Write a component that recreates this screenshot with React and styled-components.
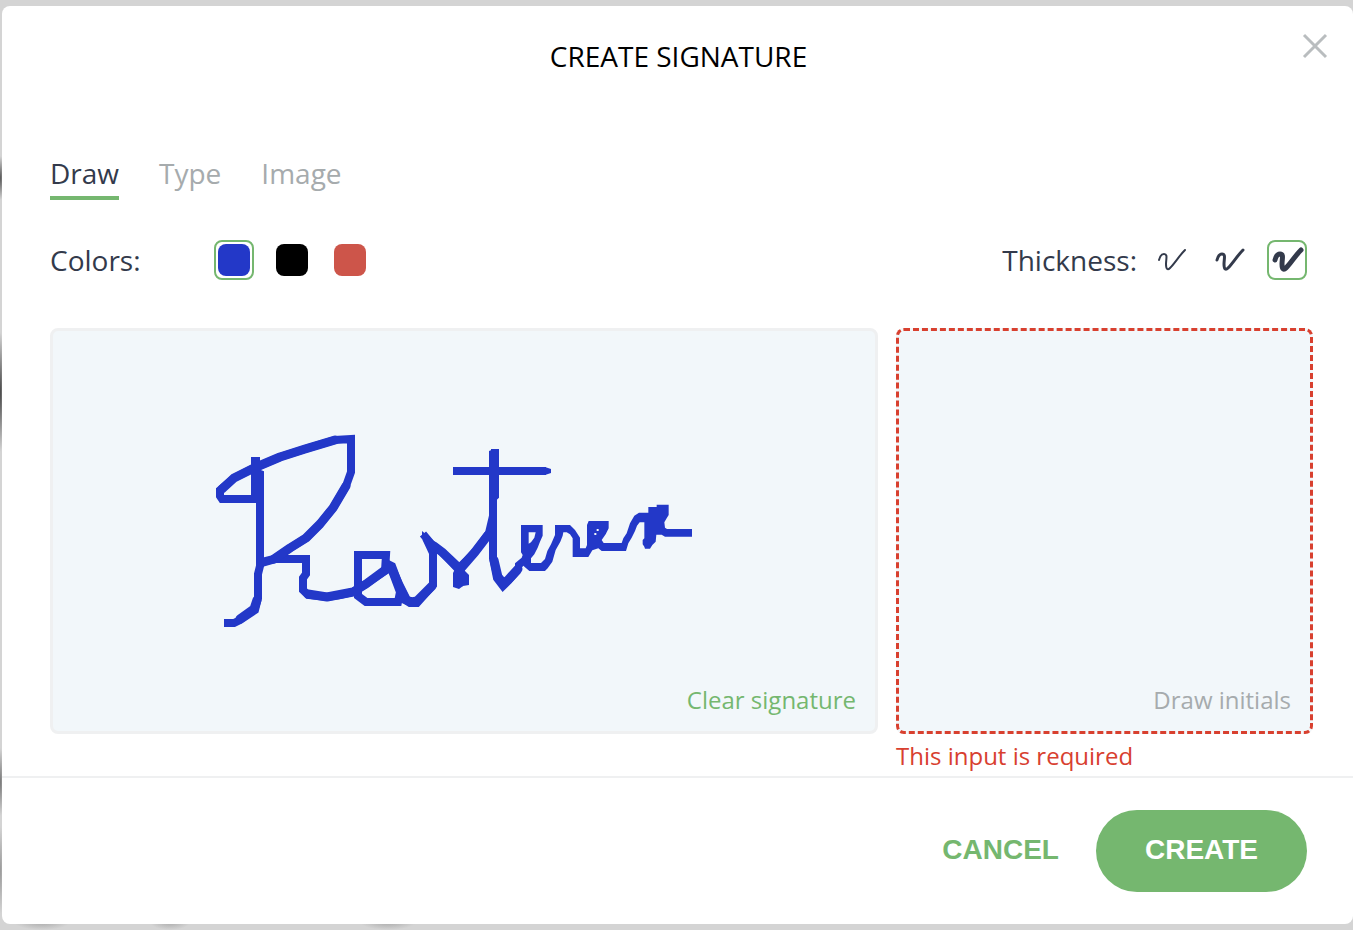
import React, { useState } from "react";
import styled, { createGlobalStyle } from "styled-components";

const ink = "#333a4b";
const green = "#75b76f";
const muted = "#a6abad";
const danger = "#d8402f";
const line = "#eff0f1";

const GlobalStyle = createGlobalStyle`
  *, *::before, *::after { box-sizing: border-box; }
  body { margin: 0; font-family: "Open Sans", "Noto Sans", sans-serif; color: ${ink}; }
  button { font: inherit; border: 0; padding: 0; background: none; cursor: pointer; }
`;

const Backdrop = styled.div`
  min-height: 100vh;
  padding: 6px 0 6px 2px;
  background:
    radial-gradient(ellipse 6px 22px at 0 178px, #555, transparent),
    radial-gradient(ellipse 6px 60px at 0 392px, #444, transparent),
    radial-gradient(ellipse 6px 34px at 0 782px, #777, transparent),
    radial-gradient(ellipse 6px 44px at 0 870px, #999, transparent),
    radial-gradient(ellipse 28px 8px at 42px 922px, #aaa, transparent),
    radial-gradient(ellipse 20px 8px at 170px 922px, #aaa, transparent),
    radial-gradient(ellipse 28px 8px at 388px 922px, #aaa, transparent),
    #d4d4d4;
`;

const Modal = styled.section`
  position: relative;
  background: #fff;
  border-radius: 8px;
`;

const Body = styled.div`
  padding: 32px 40px 4px 48px;
`;

const Title = styled.h1`
  margin: 0 0 79px;
  padding-right: 6px;
  font-size: 28px;
  line-height: 36px;
  font-weight: 400;
  text-align: center;
  color: #000;
`;

const Close = styled.button`
  position: absolute;
  top: 24px;
  right: 22px;
  width: 32px;
  height: 32px;
  svg { display: block; }
`;

const Tabs = styled.div`
  display: flex;
  gap: 40px;
`;

const Tab = styled.button`
  && {
    padding-bottom: 3px;
    border-bottom: 4px solid ${(p) => (p.$active ? green : "transparent")};
    font-size: 28px;
    line-height: 40px;
    color: ${(p) => (p.$active ? ink : muted)};
  }
`;

const Options = styled.div`
  display: flex;
  justify-content: space-between;
  margin: 40px 6px 48px 0;
`;

const Choices = styled.div`
  display: flex;
  align-items: center;
  gap: 18px;
`;

const ChoiceLabel = styled.span`
  min-width: ${(p) => p.$width || 0}px;
  margin-right: ${(p) => (p.$width ? 0 : -4)}px;
  font-size: 28px;
  line-height: 40px;
`;

const Choice = styled.label`
  position: relative;
  display: grid;
  place-items: center;
  width: 40px;
  height: 40px;
  border: 2px solid ${(p) => (p.$active ? green : "transparent")};
  border-radius: 8px;
  cursor: pointer;
`;

const Radio = styled.input`
  position: absolute;
  inset: 0;
  margin: 0;
  width: 100%;
  height: 100%;
  opacity: 0;
  cursor: pointer;
`;

const Swatch = styled.span`
  width: 32px;
  height: 32px;
  border-radius: 8px;
  background: ${(p) => p.$color};
`;

const Pads = styled.div`
  display: grid;
  grid-template-columns: 828fr 417fr;
  gap: 18px;
`;

const Pad = styled.div`
  position: relative;
  height: 406px;
  border: 3px ${(p) => (p.$invalid ? `dashed ${danger}` : `solid ${line}`)};
  border-radius: 8px;
  background: #f2f7fa;
`;

const Drawing = styled.svg`
  display: block;
  width: 100%;
  height: 100%;
`;

const PadAction = styled.button`
  && {
    position: absolute;
    right: 19px;
    bottom: 14px;
    font-size: 24px;
    line-height: 34px;
    color: ${(p) => (p.$active ? green : muted)};
  }
`;

const ErrorText = styled.p`
  margin: 8px 0 2px;
  font-size: 24px;
  line-height: 28px;
  color: ${danger};
`;

const Footer = styled.footer`
  display: flex;
  justify-content: flex-end;
  align-items: center;
  gap: 37px;
  padding: 32px 46px 32px 48px;
  border-top: 2px solid ${line};
`;

const Action = styled.button`
  && {
    height: 82px;
    padding: ${(p) => (p.$primary ? "0 49px 2px" : "0 0 2px")};
    border-radius: 41px;
    background: ${(p) => (p.$primary ? green : "none")};
    color: ${(p) => (p.$primary ? "#fff" : green)};
    font-family: "Liberation Sans", Arial, sans-serif;
    font-size: 28px;
    line-height: 32px;
    font-weight: 700;
  }
`;

const colors = [
  { name: "Blue", value: "#2338c8" },
  { name: "Black", value: "#000" },
  { name: "Red", value: "#cd554a" },
];

const weights = [
  { name: "Thin", value: 2 },
  { name: "Medium", value: 3 },
  { name: "Thick", value: 5 },
];

function Signature({ color }) {
  return (
    <Drawing viewBox="53 331 822 400" role="img" aria-label="Drawn signature">
      <g fill="none" stroke={color} strokeWidth="8" strokeMiterlimit="2">
        <path d="M255 457V499H222L220 496V490L234 478L254 468L280 457L305 449L335 440L351 439V472L346 486L333 508L320 524L306 538L290 548L274 559L262 562" />
        <path d="M255 457V472L260 474V566L258 574V598L255 610L240 620L234 623H224" />
        <path d="M262 563L276 559H306V574L303 578V590L308 595L327 597L340 595L353 592L366 584L385 571L386 555H358V596L366 602H398L400 592L391 568" />
        <path d="M386 563L392 566L399 585L407 601L410 603H417L433 585V553L426 538" />
        <path d="M423 534L433 546L442 552L460 571L459 586" />
        <path d="M460 567L475 552L489 533L493 516" />
        <path d="M495 449V496L493 498V558L497 578L503 586L508 581L518 570" />
        <path d="M453 471H546" />
      </g>
      <g
        fill="none"
        stroke={color}
        strokeWidth="9"
        strokeLinejoin="round"
        strokeLinecap="round"
      >
        <path d="M346 486L333 508L320 524L306 538L290 548L274 559M222 489L234 478L254 468L280 457L305 449L335 440M366 584L385 570M391 567L399 585L406 599M434 546L442 552L460 569M462 567L475 552L488 535M494 560L498 577L503 583L508 580L518 569M404 599L411 602L417 601L432 586M308 594L327 597L353 592L366 584M257 600L254 609L240 619" />
      </g>
      <g fill={color}>
        <path d="M251 457H260V472H263V499H251Z" />
        <path d="M422 531L440 546L433 554L425 542L422 535Z" />
        <path d="M453 573L457 565H464L465 571L469 575V585L463 586L459 589L453 587Z" />
        <path d="M489 451L494 449H499V497H489Z" />
        <path d="M545 467L551 469V473L545 475Z" />
      </g>
      <svg x="515" y="495" width="185" height="85" viewBox="0 0 555 255">
        <path
          fill={color}
          fillRule="evenodd"
          d="M18 90H83V122L75 140L68 158L58 178L48 190V204H78L90 192L97 168L108 148L120 120V90H165L180 105L195 128V160H212L216 150V90L221 78H281V100L272 118L260 135L266 144H320L325 130L335 115L345 85L358 62L372 53H400V36H425V29H461V60L455 70L448 82L450 98L456 102H531V125H450L440 119H424L422 140L412 150L405 161H390L388 155L383 148V135L388 130V82H374L366 92L360 108L350 128L340 145L333 168H260L250 160L232 166L220 186H173V130L165 118L155 112H145L143 122L136 140L122 165L112 200L98 220L90 228H43L25 212L0 242V205L20 188L23 180L18 172ZM41 112H62L58 128L48 142L41 146ZM245 102H251V108H245ZM238 114H244V120H238Z"
        />
      </svg>
    </Drawing>
  );
}

function StrokeIcon({ weight }) {
  return (
    <svg width="36" height="36" viewBox="2 2 36 36" aria-hidden="true">
      <path
        d="M8 20C9 16 11 14 13 14C17 14 15 19 15 24C15 30 17 30 19 28C24 23 28 16 34 10"
        fill="none"
        stroke={ink}
        strokeWidth={weight}
        strokeLinecap="round"
      />
    </svg>
  );
}

export default function App() {
  const [tab, setTab] = useState("Draw");
  const [color, setColor] = useState(colors[0].value);
  const [weight, setWeight] = useState(5);

  return (
    <>
      <GlobalStyle />
      <Backdrop>
        <Modal role="dialog" aria-labelledby="dialog-title">
          <Close aria-label="Close">
            <svg width="32" height="32" viewBox="0 0 32 32" aria-hidden="true">
              <path d="M5 5L27 27M27 5L5 27" stroke="#b9bdbf" strokeWidth="3" />
            </svg>
          </Close>
          <Body>
            <Title id="dialog-title">CREATE SIGNATURE</Title>
            <Tabs role="tablist">
              {["Draw", "Type", "Image"].map((name) => (
                <Tab
                  key={name}
                  role="tab"
                  aria-selected={tab === name}
                  $active={tab === name}
                  onClick={() => setTab(name)}
                >
                  {name}
                </Tab>
              ))}
            </Tabs>
            <Options>
              <Choices role="radiogroup" aria-labelledby="colors-label">
                <ChoiceLabel id="colors-label" $width={146}>Colors:</ChoiceLabel>
                {colors.map((c) => (
                  <Choice key={c.name} $active={color === c.value}>
                    <Radio
                      type="radio"
                      name="color"
                      aria-label={c.name}
                      checked={color === c.value}
                      onChange={() => setColor(c.value)}
                    />
                    <Swatch $color={c.value} />
                  </Choice>
                ))}
              </Choices>
              <Choices role="radiogroup" aria-labelledby="thickness-label">
                <ChoiceLabel id="thickness-label">Thickness:</ChoiceLabel>
                {weights.map((w) => (
                  <Choice key={w.name} $active={weight === w.value}>
                    <Radio
                      type="radio"
                      name="thickness"
                      aria-label={w.name}
                      checked={weight === w.value}
                      onChange={() => setWeight(w.value)}
                    />
                    <StrokeIcon weight={w.value} />
                  </Choice>
                ))}
              </Choices>
            </Options>
            <Pads>
              <div>
                <Pad>
                  <Signature color={color} />
                  <PadAction $active>Clear signature</PadAction>
                </Pad>
              </div>
              <div>
                <Pad $invalid>
                  <PadAction>Draw initials</PadAction>
                </Pad>
                <ErrorText role="alert">This input is required</ErrorText>
              </div>
            </Pads>
          </Body>
          <Footer>
            <Action>CANCEL</Action>
            <Action $primary>CREATE</Action>
          </Footer>
        </Modal>
      </Backdrop>
    </>
  );
}
